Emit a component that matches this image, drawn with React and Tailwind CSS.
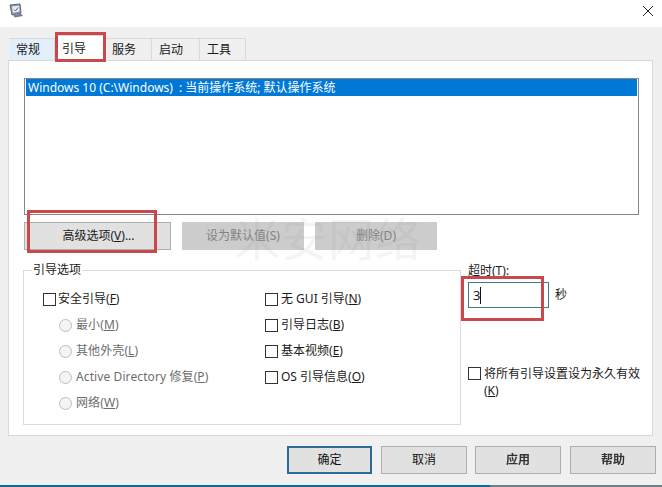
const font = { fontFamily: '"Noto Sans", "Noto Sans CJK SC", sans-serif' };

const tabs = [
  { label: "常规", width: "w-[46px]", cls: "bg-[#e3effa]" },
  { label: "引导", width: "w-[50px]", cls: "bg-white", active: true },
  { label: "服务", width: "w-[47px]", cls: "bg-[#f0f0f0]" },
  { label: "启动", width: "w-[48px]", cls: "bg-[#f0f0f0]" },
  { label: "工具", width: "w-[46px]", cls: "bg-[#f0f0f0]" },
];

const radios = [
  { label: "最小", key: "M" },
  { label: "其他外壳", key: "L" },
  { label: "Active Directory 修复", key: "P" },
  { label: "网络", key: "W" },
];

const rightChecks = [
  { label: "无 GUI 引导", key: "N" },
  { label: "引导日志", key: "B" },
  { label: "基本视频", key: "E" },
  { label: "OS 引导信息", key: "O" },
];

function Box() {
  return <span className="w-[13px] h-[13px] shrink-0 bg-white border border-[#333333]" />;
}

function Mnemonic({ k }) {
  return (
    <>
      (<u>{k}</u>)
    </>
  );
}

function MachineIcon() {
  return (
    <svg width="16" height="16" viewBox="0 0 16 16">
      <path d="M2 2l10-1 1 9-9 2z" fill="#8f9cab" stroke="#5d6773" />
      <path d="M4 3.5l7-.7.6 5.7-6.6 1.3z" fill="#e4edf5" />
      <path d="M6 6.5l1.5 1.5L10 4.5" fill="none" stroke="#4a6f96" />
      <path d="M5 12.5l8-2 2 2.5-8 1.5z" fill="#77818c" />
    </svg>
  );
}

export default function App() {
  return (
    <div
      style={font}
      className="relative w-[662px] h-[487px] overflow-hidden bg-[#f0f0f0] flex flex-col text-[12px] leading-[16px] text-[#1a1a1a]"
    >
      {/* title bar */}
      <div className="h-[27px] bg-white flex items-start justify-between pl-[8px] pr-[7px] pt-[3px]">
        <MachineIcon />
        <svg width="14" height="14" viewBox="0 0 14 14" className="mt-[1px]">
          <path d="M2 2l10 10M12 2L2 12" stroke="#222222" strokeWidth="1" />
        </svg>
      </div>

      {/* tabs */}
      <div className="mt-[11px] pl-[9px] flex h-[22px]">
        {tabs.map((t) => (
          <div
            key={t.label}
            className={`${t.width} ${t.cls} border-t border-r border-[#d9d9d9] flex items-center pl-[7px] ${t.active ? "h-[26px] -mt-[3px] z-10" : ""}`}
          >
            {t.label}
          </div>
        ))}
      </div>

      {/* panel */}
      <div className="ml-[8px] w-[645px] h-[376px] bg-white border border-[#d9d9d9] pl-[15px] pt-[17px]">
        <div className="w-[615px] h-[137px] border border-[#828790] px-[1px]">
          <div className="h-[17px] bg-[#0078d7] text-white pl-[2px] leading-[17px] flex">
            <span>Windows 10 (C:\Windows)</span>
            <span className="ml-[6px] mr-[3px]">:</span>
            <span>当前操作系统; 默认操作系统</span>
          </div>
        </div>

        <div className="mt-[7px] flex">
          <div className="w-[147px] h-[28px] bg-[#e1e1e1] border border-[#adadad] flex items-center justify-center pl-[2px]">
            高级选项(<u>V</u>)...
          </div>
          <div className="ml-[11px] w-[122px] h-[28px] bg-[#cccccc] text-[#838383] flex items-center justify-center">
            设为默认值(S)
          </div>
          <div className="ml-[11px] w-[122px] h-[28px] bg-[#cccccc] text-[#838383] flex items-center justify-center">
            删除(D)
          </div>
        </div>

        <div className="mt-[20px] flex">
          {/* boot options */}
          <div className="relative -ml-[1px] w-[438px] h-[155px] border border-[#dcdcdc] pl-[19px] pt-[15px] flex">
            <span className="absolute left-[8px] -top-[9px] bg-white px-[1px]">引导选项</span>
            <div className="w-[222px]">
              <div className="h-[26px] flex items-center gap-[2px]">
                <Box />
                <span>
                  安全引导
                  <Mnemonic k="F" />
                </span>
              </div>
              {radios.map((r) => (
                <div key={r.key} className="h-[26px] flex items-center gap-[4px] pl-[16px] text-[#6d6d6d]">
                  <span className="w-[13px] h-[13px] rounded-full border border-[#bcbcbc] bg-[#f4f4f4] shrink-0" />
                  <span className="tracking-[0.1px]">
                    {r.label}
                    <Mnemonic k={r.key} />
                  </span>
                </div>
              ))}
            </div>
            <div>
              {rightChecks.map((c) => (
                <div key={c.key} className="h-[26px] flex items-center gap-[3px]">
                  <Box />
                  <span>
                    {c.label}
                    <Mnemonic k={c.key} />
                  </span>
                </div>
              ))}
            </div>
          </div>

          {/* timeout */}
          <div className="ml-[7px] -mt-[7px] w-[178px]">
            <div className="h-[16px]">
              超时(<u>T</u>):
            </div>
            <div className="mt-[3px] flex items-center">
              <div className="w-[81px] h-[26px] border border-[#3f7a8c] flex items-center pl-[4px] text-[13px]">
                3<span className="w-px h-[17px] bg-[#111111]" />
              </div>
              <span className="ml-[6px]">秒</span>
            </div>
            <div className="mt-[57px] flex items-start gap-[3px]">
              <span className="mt-[2px] flex">
                <Box />
              </span>
              <span className="w-[160px] leading-[17px]">
                将所有引导设置设为永久有效
                <br />
                <Mnemonic k="K" />
              </span>
            </div>
          </div>
        </div>
      </div>

      {/* footer buttons */}
      <div className="mt-[10px] flex pl-[287px] text-[#111111]">
        <div className="w-[85px] h-[28px] bg-[#e1e1e1] border-2 border-[#2c6a96] flex items-center justify-center">确定</div>
        <div className="ml-[9px] w-[86px] h-[28px] bg-[#e1e1e1] border border-[#adadad] flex items-center justify-center">取消</div>
        <div className="ml-[8px] w-[86px] h-[28px] bg-[#e1e1e1] border border-[#adadad] flex items-center justify-center">
          <span className="blur-[0.7px] font-bold text-[#333333]">应用</span>
        </div>
        <div className="ml-[9px] w-[86px] h-[28px] bg-[#e1e1e1] border border-[#adadad] flex items-center justify-center">
          <span className="blur-[0.7px] font-bold text-[#333333]">帮助</span>
        </div>
      </div>

      {/* desktop edge under the window */}
      <div className="mt-auto h-[2px] flex">
        <div className="w-[490px] bg-[#0b6a9c]" />
        <div className="flex-1 bg-[#6f7f88]" />
      </div>

      {/* watermark */}
      <div className="absolute left-[234px] top-[212px] text-[46px] leading-[52px] tracking-[1px] text-[#8a8a8a]/10 pointer-events-none">
        米安网络
      </div>

      {/* red annotation boxes */}
      <div className="absolute z-20 left-[55px] top-[32px] w-[51px] h-[30px] border-[3px] border-[#c9484c]" />
      <div className="absolute z-20 left-[27px] top-[210px] w-[130px] h-[43px] border-[3px] border-[#c9484c]" />
      <div className="absolute z-20 left-[461px] top-[276px] w-[83px] h-[45px] border-[3px] border-[#c9484c]" />
    </div>
  );
}
